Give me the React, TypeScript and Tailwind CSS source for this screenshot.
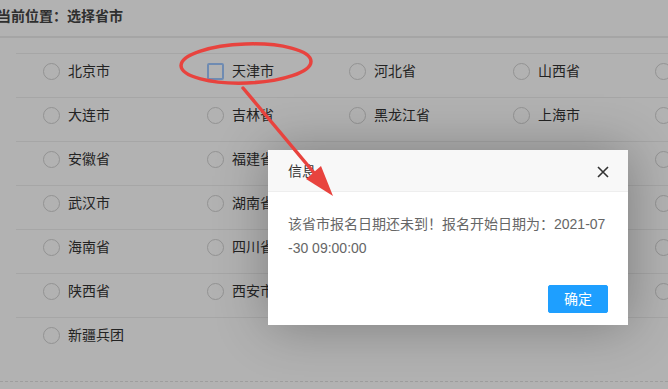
import type { ReactNode } from "react";

const colWidths = ["w-[164px]", "w-[142px]", "w-[164px]", "w-[142px]", "w-[142px]"];

const rows: string[][] = [
  ["北京市", "天津市", "河北省", "山西省", "内蒙古"],
  ["大连市", "吉林省", "黑龙江省", "上海市", "江苏省"],
  ["安徽省", "福建省", "江西省", "山东省", "河南省"],
  ["武汉市", "湖南省", "广东省", "广西省", "重庆市"],
  ["海南省", "四川省", "贵州省", "云南省", "西藏"],
  ["陕西省", "西安市", "甘肃省", "青海省", "宁夏"],
  ["新疆兵团"],
];

function Option({ label, hover, className }: { label: string; hover?: boolean; className: string }) {
  return (
    <div className={`${className} shrink-0 flex items-center gap-[8px] h-[18px]`}>
      {hover ? (
        <span className="w-[17px] h-[17px] rounded-[2px] border-2 border-[#9fc8ff] shrink-0" />
      ) : (
        <span className="w-[17px] h-[17px] rounded-full border border-[#d2d2d2] bg-white shrink-0" />
      )}
      <span className="text-[14px] text-[#333] leading-[18px] whitespace-nowrap">{label}</span>
    </div>
  );
}

function Dialog({ children }: { children: ReactNode }) {
  return (
    <div className="absolute left-[268px] top-[150px] w-[360px] bg-white shadow-[1px_1px_50px_rgba(0,0,0,0.3)]">
      <div className="relative h-[42px] leading-[42px] bg-[#f8f8f8] border-b border-[#eee] pl-[20px] text-[14px] text-[#333]">
        信息
        <svg className="absolute right-[19px] top-[16px]" width="12" height="12" viewBox="0 0 12 12">
          <path d="M1 1 L11 11 M11 1 L1 11" stroke="#333" strokeWidth="1.6" fill="none" />
        </svg>
      </div>
      <div className="p-[20px] text-[14px] leading-[24px] text-[#666] break-all">{children}</div>
      <div className="flex justify-end pr-[15px] pb-[12px]">
        <button className="mt-[5px] mr-[5px] h-[28px] px-[15px] border border-[#1E9FFF] bg-[#1E9FFF] text-white text-[14px] leading-[26px] rounded-[2px]">
          确定
        </button>
      </div>
    </div>
  );
}

export default function App() {
  return (
    <div
      className="relative w-[668px] h-[389px] overflow-hidden bg-white"
      style={{ fontFamily: '"Liberation Sans", "Noto Sans CJK SC", sans-serif' }}
    >
      <div className="h-[38px] border-b-2 border-[#ececec] pt-[6px]">
        <p className="-ml-[3px] text-[14px] font-bold text-[#444] leading-[20px] whitespace-nowrap">
          当前位置：选择省市
        </p>
      </div>
      <div className="ml-[16px] mt-[15px]">
        {rows.map((row, i) => (
          <div key={i} className="h-[44px] border-t border-[#eee] pt-[8px] pl-[27px] flex">
            {row.map((label, j) => (
              <Option key={label} label={label} hover={i === 0 && j === 1} className={colWidths[j]} />
            ))}
          </div>
        ))}
      </div>
      <div className="mt-[20px] border-t border-dashed border-[#e2e2e2]" />

      <div className="absolute inset-0 bg-black/30" />

      <Dialog>该省市报名日期还未到！报名开始日期为：2021-07-30 09:00:00</Dialog>

      <svg className="absolute inset-0 pointer-events-none" width="668" height="389" viewBox="0 0 668 389">
        <ellipse cx="246" cy="63.5" rx="65" ry="19.5" transform="rotate(-2 246 63.5)" fill="none" stroke="#e8433e" strokeWidth="3.5" />
        <line x1="243" y1="88" x2="315" y2="174" stroke="#e8433e" strokeWidth="3.5" strokeLinecap="round" />
        <polygon points="333,196 321,166 306,179" fill="#e8433e" />
      </svg>
    </div>
  );
}
